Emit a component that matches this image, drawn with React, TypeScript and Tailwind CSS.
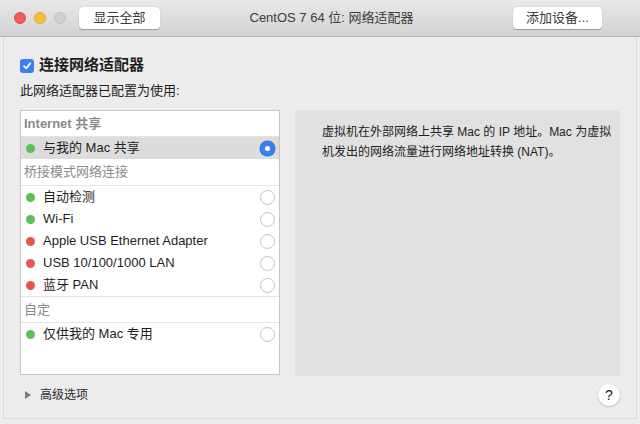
import React from "react";

const F = { fontFamily: '"Liberation Sans", "Noto Sans CJK SC", sans-serif' };

function Radio({ on }: { on?: boolean }) {
  if (on)
    return (
      <div className="w-[15px] h-[15px] rounded-full bg-[#3d7ff0] flex items-center justify-center shadow-[0_0_0_0.5px_#2f6ad8]">
        <div className="w-[5px] h-[5px] rounded-full bg-white" />
      </div>
    );
  return <div className="w-[15px] h-[15px] rounded-full bg-white border border-[#c4c4c4]" />;
}

function Row({ label, color, on }: { label: string; color: string; on?: boolean }) {
  return (
    <div className={`h-[22px] flex items-center pl-[5px] pr-[4px] ${on ? "bg-[#dcdcdc]" : ""}`}>
      <div className="w-[9px] h-[9px] rounded-full" style={{ background: color }} />
      <div className="ml-[8px] flex-1 text-[13px] text-[#1e1e1e]">{label}</div>
      <Radio on={on} />
    </div>
  );
}

function Header({ label, h }: { label: string; h: string }) {
  return (
    <div className={`${h} flex items-center pl-[3px] text-[13px] text-[#8a8a8a] border-b border-[#e4e4e4]`}>{label}</div>
  );
}

const green = "#5ac24f";
const red = "#e9564e";

export default function App() {
  return (
    <div className="w-[640px] h-[424px] bg-[#ececec] flex flex-col overflow-hidden" style={F}>
      {/* title bar */}
      <div className="h-[37px] flex items-center px-[14px] bg-gradient-to-b from-[#e9e9e9] to-[#d2d2d2] border-b border-[#b4b4b4] rounded-t-[5px] relative">
        <div className="flex gap-[8px] items-center">
          <div className="w-[12px] h-[12px] rounded-full bg-[#f25d58] border border-[#df4a44]" />
          <div className="w-[12px] h-[12px] rounded-full bg-[#f6be3b] border border-[#e0a630]" />
          <div className="w-[12px] h-[12px] rounded-full bg-[#d0d0d0] border border-[#c0c0c0]" />
        </div>
        <div className="ml-[13px] w-[81px] h-[22px] bg-white rounded-[4px] shadow-[0_0.5px_1px_rgba(0,0,0,0.3)] flex items-center justify-center text-[13px] text-[#3a3a3a]">
          显示全部
        </div>
        <div className="flex-1 text-center text-[13px] text-[#3c3c3c] pr-[10px]">CentOS 7 64 位: 网络适配器</div>
        <div className="mr-[24px] w-[89px] h-[22px] bg-white rounded-[4px] shadow-[0_0.5px_1px_rgba(0,0,0,0.3)] flex items-center justify-center text-[13px] text-[#3a3a3a]">
          添加设备...
        </div>
      </div>
      {/* content */}
      <div className="flex-1 mx-[3px] mb-[5px] border-l border-r border-b border-[#dadada] flex flex-col px-[16px]">
        <div className="mt-[21px] flex items-center h-[15px]">
          <div className="w-[14px] h-[14px] rounded-[3px] bg-[#3d7ff0] flex items-center justify-center">
            <svg width="10" height="10" viewBox="0 0 10 10">
              <path d="M2 5.2 L4.2 7.4 L8.2 2.4" stroke="white" strokeWidth="1.7" fill="none" strokeLinecap="round" strokeLinejoin="round" />
            </svg>
          </div>
          <div className="ml-[5px] text-[15px] font-bold text-[#1e1e1e]">连接网络适配器</div>
        </div>
        <div className="mt-[10px] text-[13px] text-[#1e1e1e] leading-[16px]">此网络适配器已配置为使用:</div>
        <div className="mt-[11px] flex gap-[15px]">
          <div className="w-[260px] h-[265px] bg-white border border-[#c6c6c6] flex flex-col">
            <Header label="Internet 共享" h="h-[26px] font-semibold" />
            <Row label="与我的 Mac 共享" color={green} on />
            <Header label="桥接模式网络连接" h="h-[27px]" />
            <Row label="自动检测" color={green} />
            <Row label="Wi-Fi" color={green} />
            <Row label="Apple USB Ethernet Adapter" color={red} />
            <Row label="USB 10/100/1000 LAN" color={red} />
            <div className="border-b border-[#e4e4e4]">
              <Row label="蓝牙 PAN" color={red} />
            </div>
            <Header label="自定" h="h-[26px]" />
            <Row label="仅供我的 Mac 专用" color={green} />
          </div>
          <div className="w-[325px] h-[266px] bg-[#e1e1e1] rounded-[4px] pl-[27px] pr-[4px] pt-[12px] text-[12px] leading-[20px] text-[#222] whitespace-nowrap">
            虚拟机在外部网络上共享 Mac 的 IP 地址。Mac 为虚拟
            <br />
            机发出的网络流量进行网络地址转换 (NAT)。
          </div>
        </div>
        <div className="mt-[7px] flex items-center h-[24px]">
          <svg width="10" height="10" viewBox="0 0 10 10" className="ml-[3px]">
            <path d="M2 1 L8 5 L2 9 Z" fill="#7a7a7a" />
          </svg>
          <div className="ml-[7px] text-[12px] text-[#2a2a2a]">高级选项</div>
          <div className="flex-1" />
          <div className="w-[22px] h-[22px] rounded-full bg-white shadow-[0_0.5px_1.5px_rgba(0,0,0,0.35)] flex items-center justify-center text-[14px] text-[#222] mr-[0px]">
            ?
          </div>
        </div>
      </div>
    </div>
  );
}
